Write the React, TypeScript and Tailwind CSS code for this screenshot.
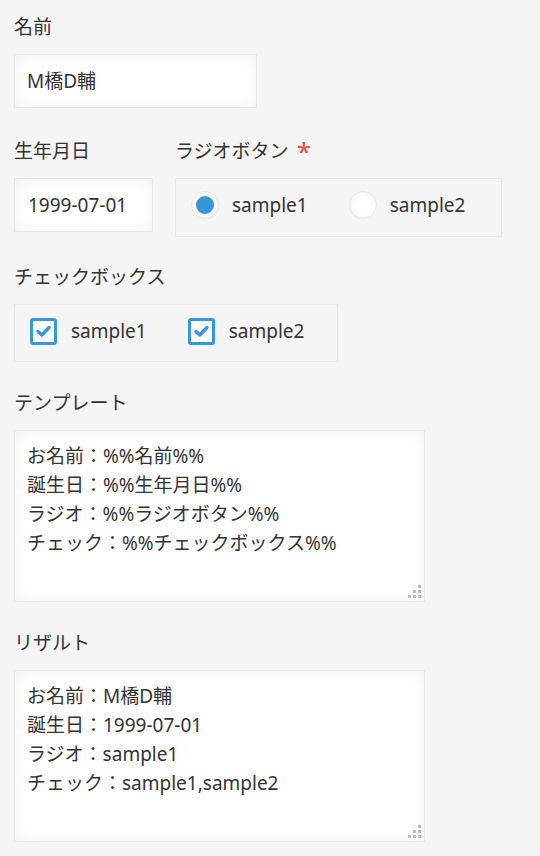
import React from "react";

const font = {
  fontFamily: '"Noto Sans", "Noto Sans CJK JP", sans-serif',
};

const box =
  "bg-white border border-[#e3e7e8] shadow-[inset_1px_1px_16px_#f2f2f2]";

function Label({ text, required }: { text: string; required?: boolean }) {
  return (
    <div className="h-[27px] leading-[27px] text-[19px] text-[#333] mb-[13px] flex items-center">
      <span>{text}</span>
      {required && (
        <span className="ml-[8px] text-[#e74c3c] text-[26px] leading-none -mt-[2px]">*</span>
      )}
    </div>
  );
}

function Radio({ label, checked }: { label: string; checked?: boolean }) {
  return (
    <div className="flex items-center gap-[13px]">
      <span className="w-[28px] h-[28px] rounded-full bg-white border border-[#e3e7e8] shadow-[inset_1px_1px_6px_#f0f0f0] flex items-center justify-center">
        {checked && <span className="w-[18px] h-[18px] rounded-full bg-[#3498db]" />}
      </span>
      <span className="text-[19px] leading-[26px] text-[#333]">{label}</span>
    </div>
  );
}

function Check({ label }: { label: string }) {
  return (
    <div className="flex items-center gap-[14px]">
      <span className="w-[27px] h-[27px] rounded-[3px] bg-white border-[3px] border-[#3498db] flex items-center justify-center">
        <svg width="15" height="12" viewBox="0 0 15 12">
          <path d="M2 6.5 L5.8 10 L13 2.5" fill="none" stroke="#3498db" strokeWidth="3.4" strokeLinecap="round" strokeLinejoin="round" />
        </svg>
      </span>
      <span className="text-[19px] leading-[26px] text-[#333]">{label}</span>
    </div>
  );
}

function Grip() {
  const c = "#aebccd";
  return (
    <svg className="absolute right-[3px] bottom-[3px]" width="13" height="13" viewBox="0 0 13 13">
      <rect x="10" y="0" width="3" height="3" fill={c} />
      <rect x="5" y="5" width="3" height="3" fill={c} />
      <rect x="10" y="5" width="3" height="3" fill={c} />
      <rect x="0" y="10" width="3" height="3" fill={c} />
      <rect x="5" y="10" width="3" height="3" fill={c} />
      <rect x="10" y="10" width="3" height="3" fill={c} />
    </svg>
  );
}

function Area({ lines }: { lines: string[] }) {
  return (
    <div className={`${box} relative w-[411px] h-[172px] pl-[12px] pt-[11px] text-[19px] leading-[29px] text-[#333]`}>
      {lines.map((l) => (
        <div key={l}>{l}</div>
      ))}
      <Grip />
    </div>
  );
}

export default function App() {
  return (
    <div className="min-h-screen bg-[#f5f5f5] px-[14px] pt-[14px]" style={font}>
      <div className="mb-[30px]">
        <Label text="名前" />
        <div className={`${box} w-[243px] h-[54px] flex items-center pl-[12px] text-[19px] text-[#333]`}>
          M橋D輔
        </div>
      </div>

      <div className="flex gap-[22px] mb-[27px]">
        <div>
          <Label text="生年月日" />
          <div className={`${box} w-[139px] h-[54px] flex items-center pl-[13px] text-[19px] text-[#333]`}>
            1999-07-01
          </div>
        </div>
        <div>
          <Label text="ラジオボタン" required />
          <div className="h-[59px] border border-[#e3e7e8] flex items-center pl-[15px] pr-[36px] pb-[6px] gap-[41px]">
            <Radio label="sample1" checked />
            <Radio label="sample2" />
          </div>
        </div>
      </div>

      <div className="mb-[28px]">
        <Label text="チェックボックス" />
        <div className="inline-flex h-[58px] border border-[#e3e7e8] items-center pl-[15px] pr-[33px] pb-[4px] gap-[41px]">
          <Check label="sample1" />
          <Check label="sample2" />
        </div>
      </div>

      <div className="mb-[28px]">
        <Label text="テンプレート" />
        <Area
          lines={[
            "お名前：%%名前%%",
            "誕生日：%%生年月日%%",
            "ラジオ：%%ラジオボタン%%",
            "チェック：%%チェックボックス%%",
          ]}
        />
      </div>

      <div>
        <Label text="リザルト" />
        <Area
          lines={[
            "お名前：M橋D輔",
            "誕生日：1999-07-01",
            "ラジオ：sample1",
            "チェック：sample1,sample2",
          ]}
        />
      </div>
    </div>
  );
}
